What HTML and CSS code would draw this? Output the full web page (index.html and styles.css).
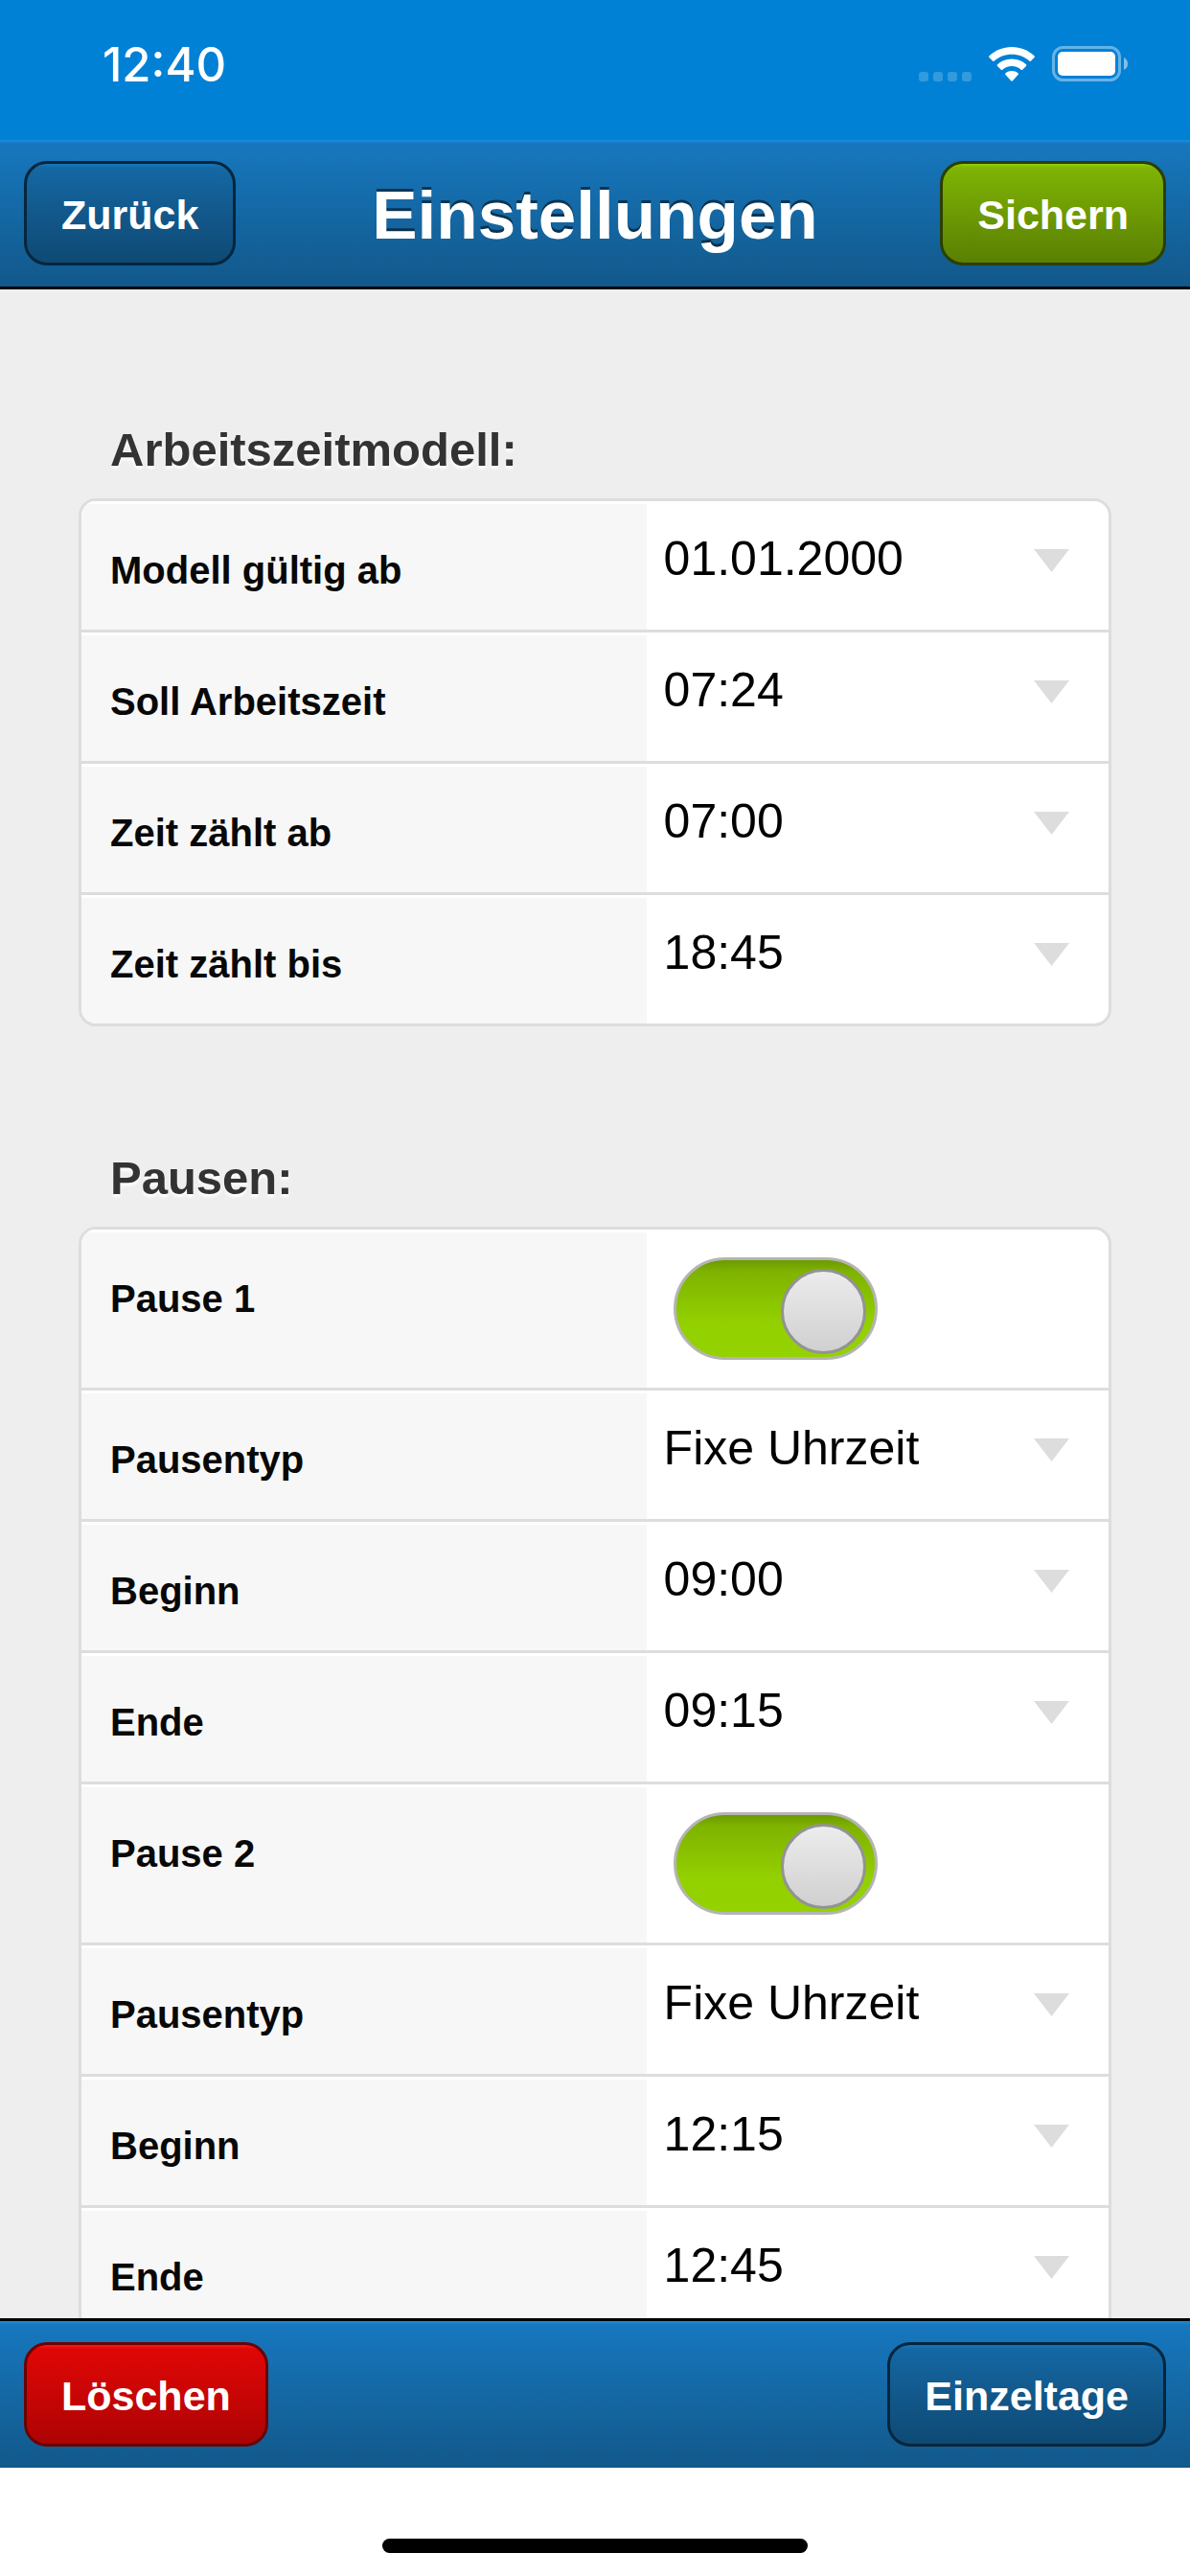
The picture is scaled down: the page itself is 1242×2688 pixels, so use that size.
FILE: index.html
```html
<!DOCTYPE html>
<html lang="de">
<head>
    <meta charset="utf-8">
    <title>Einstellungen</title>
    <meta name="viewport" content="width=device-width, initial-scale=1.0">
    <link rel="stylesheet" href="styles.css">
</head>
<body>
    <div class="statusbar">
        <span class="time">12:40</span>
        <div class="status-icons">
            <svg class="cell" viewBox="0 0 55 10" width="55" height="10">
                <rect x="0" width="10" height="10" rx="3"/>
                <rect x="15" width="10" height="10" rx="3"/>
                <rect x="30" width="10" height="10" rx="3"/>
                <rect x="45" width="10" height="10" rx="3"/>
            </svg>
            <svg class="wifi" viewBox="0 0 48 36" width="48" height="36">
                <path d="M24 0C33 0 41.500 3.500 47.500 9.300Q48.300 10.100 47.500 11L43.800 14.700Q43 15.300 42.200 14.600C37.500 10.200 31 7.700 24 7.700S10.500 10.200 5.800 14.600Q5 15.300 4.200 14.700L.5 11Q-.3 10.100.5 9.300C6.500 3.500 15 0 24 0Z"/>
                <path d="M24 12.400C30 12.400 35 14.500 39 18.200Q39.800 19 39 19.900L35.200 23.700Q34.400 24.400 33.600 23.700C31 21.400 27.700 20.100 24 20.100S17 21.400 14.400 23.700Q13.600 24.400 12.800 23.700L9 19.900Q8.200 19 9 18.200C13 14.500 18 12.400 24 12.400Z"/>
                <path d="M24 25C26.500 25 28.700 25.800 30.500 27.300Q31.300 28.100 30.500 29L24.900 35.300Q24 36.200 23.100 35.300L17.500 29Q16.700 28.100 17.500 27.300C19.300 25.800 21.500 25 24 25Z"/>
            </svg>
            <svg class="battery" viewBox="0 0 80 37" width="80" height="37">
                <rect x="1.500" y="1.500" width="69" height="34" rx="10" fill="none" stroke="#fff" stroke-opacity=".4" stroke-width="3"/>
                <rect x="6" y="6" width="60" height="25" rx="5"/>
                <path d="M75 12Q79 14 79 18.500T75 25Z" fill-opacity=".5"/>
            </svg>
        </div>
    </div>

    <header class="toolbar top">
        <button type="button" class="button">Zurück</button>
        <h1>Einstellungen</h1>
        <button type="button" class="button green">Sichern</button>
    </header>

    <main class="content">
        <section>
            <h2>Arbeitszeitmodell:</h2>
            <div class="panel">
                <div class="row">
                    <label for="gueltigAb">Modell gültig ab</label>
                    <div class="field"><select id="gueltigAb"><option>01.01.2000</option></select></div>
                </div>
                <div class="row">
                    <label for="soll">Soll Arbeitszeit</label>
                    <div class="field"><select id="soll"><option>07:24</option></select></div>
                </div>
                <div class="row">
                    <label for="zaehltAb">Zeit zählt ab</label>
                    <div class="field"><select id="zaehltAb"><option>07:00</option></select></div>
                </div>
                <div class="row">
                    <label for="zaehltBis">Zeit zählt bis</label>
                    <div class="field"><select id="zaehltBis"><option>18:45</option></select></div>
                </div>
            </div>
        </section>

        <section>
            <h2>Pausen:</h2>
            <div class="panel">
                <div class="row">
                    <label for="pause1">Pause 1</label>
                    <div class="switch"><input type="checkbox" id="pause1" checked></div>
                </div>
                <div class="row">
                    <label for="typ1">Pausentyp</label>
                    <div class="field"><select id="typ1"><option>Fixe Uhrzeit</option></select></div>
                </div>
                <div class="row">
                    <label for="beginn1">Beginn</label>
                    <div class="field"><select id="beginn1"><option>09:00</option></select></div>
                </div>
                <div class="row">
                    <label for="ende1">Ende</label>
                    <div class="field"><select id="ende1"><option>09:15</option></select></div>
                </div>
                <div class="row">
                    <label for="pause2">Pause 2</label>
                    <div class="switch"><input type="checkbox" id="pause2" checked></div>
                </div>
                <div class="row">
                    <label for="typ2">Pausentyp</label>
                    <div class="field"><select id="typ2"><option>Fixe Uhrzeit</option></select></div>
                </div>
                <div class="row">
                    <label for="beginn2">Beginn</label>
                    <div class="field"><select id="beginn2"><option>12:15</option></select></div>
                </div>
                <div class="row">
                    <label for="ende2">Ende</label>
                    <div class="field"><select id="ende2"><option>12:45</option></select></div>
                </div>
            </div>
        </section>
    </main>

    <footer class="toolbar bottom">
        <button type="button" class="button red">Löschen</button>
        <button type="button" class="button">Einzeltage</button>
    </footer>
    <div class="home"><div class="home-bar"></div></div>
</body>
</html>
```

FILE: styles.css
```css
*, *::before, *::after {
    box-sizing: border-box;
}
body {
    margin: 0;
    height: 100vh;
    display: flex;
    flex-direction: column;
    background-color: #eee;
    font-family: "Liberation Sans", Arial, sans-serif;
    color: #000;
}

/* status bar */
.statusbar {
    flex: none;
    display: flex;
    justify-content: space-between;
    padding: 39px 64px 49px 107px;
    background-color: #0081d6;
    color: #fff;
}
.time {
    font-family: Inter, sans-serif;
    font-size: 49px;
    line-height: 58px;
    font-weight: 500;
}
.status-icons {
    display: flex;
    align-items: flex-end;
    gap: 18px;
    padding-bottom: 12px;
    fill: #fff;
}
.cell {
    opacity: .2;
}

/* toolbars */
.toolbar {
    flex: none;
    display: flex;
    justify-content: space-between;
    align-items: center;
    padding: 22px 25px;
    background: linear-gradient(#1a8be0, #1777be 4px, #1468a4 50%, #12588b);
    border-bottom: 3px solid #000;
}
.toolbar.top {
    display: grid;
    grid-template-columns: 1fr auto 1fr;
    justify-items: start;
}
.toolbar.top .button:last-child {
    justify-self: end;
}
.toolbar.bottom {
    border-bottom: 0;
    border-top: 3px solid #000;
}
h1 {
    margin: 0;
    padding-top: 4px;
    font-size: 71px;
    line-height: 84px;
    color: #fff;
    text-shadow: 0 -3px 0 rgba(0, 0, 0, .5);
}
.button {
    padding: 28px 36px 24px;
    border: 3px solid #05263d;
    border-radius: 24px;
    background: linear-gradient(#1777be, #1468a4 4px, #12588b 50%, #0e4a75);
    color: #fff;
    font-family: inherit;
    font-size: 43px;
    line-height: 51px;
    font-weight: bold;
}
.button.green {
    border-color: #2b3f03;
    background: linear-gradient(#94cf05, #7fb405 4px, #6d9a04 50%, #5a8002);
}
.button.red {
    border-color: #690404;
    background: linear-gradient(#f71b1b, #e00606 4px, #c80505 50%, #ac0303);
}

/* settings */
.content {
    flex: 1;
    min-height: 0;
    overflow-y: auto;
    scrollbar-width: none;
    padding: 9px 82px 129px;
}
h2 {
    margin: 129px 0 22px;
    padding: 0 33px;
    font-size: 49px;
    line-height: 58px;
    color: #333;
    text-shadow: 0 3px 3px #fff;
}
.panel {
    border: 3px solid #ddd;
    border-radius: 18px;
    background-color: #fff;
    overflow: hidden;
}
.row {
    display: flex;
    border-bottom: 3px solid #ddd;
}
.row:last-child {
    border-bottom: 0;
}
.row label {
    width: 55%;
    padding: 46px 30px 39px;
    border-top: 3px solid #fff;
    background-color: #f7f7f7;
    color: #080808;
    font-size: 40px;
    line-height: 46px;
    font-weight: bold;
}
.field {
    position: relative;
    flex: 1;
}
.field select {
    appearance: none;
    width: 100%;
    padding: 31px 90px 31px 18px;
    border: 0;
    border-radius: 0;
    background: none;
    color: #000;
    font-family: inherit;
    font-size: 50px;
    line-height: 58px;
}
.field::after {
    content: "";
    position: absolute;
    top: 50px;
    right: 41px;
    width: 37px;
    height: 24px;
    background-color: #ddd;
    clip-path: polygon(0 0, 100% 0, 50% 100%);
    pointer-events: none;
}
.switch {
    flex: 1;
    padding: 29px 28px;
}
.switch input {
    appearance: none;
    display: flex;
    align-items: center;
    width: 213px;
    height: 107px;
    margin: 0;
    padding: 6px 9px 0;
    border: 3px solid #b4b4b4;
    border-radius: 54px;
    background: #ddd;
}
.switch input:checked {
    justify-content: flex-end;
    background: linear-gradient(#6c9a00, #7fb300 12px, #93d000 65%, #94d200);
}
.switch input::before {
    content: "";
    width: 89px;
    height: 89px;
    border: 3px solid #939393;
    border-radius: 50%;
    background: linear-gradient(#ececec, #d0d0d0);
}

.home {
    flex: none;
    padding: 74px 0 24px;
    background-color: #fff;
}
.home-bar {
    width: 444px;
    height: 15px;
    margin: 0 auto;
    border-radius: 8px;
    background-color: #000;
}
```
